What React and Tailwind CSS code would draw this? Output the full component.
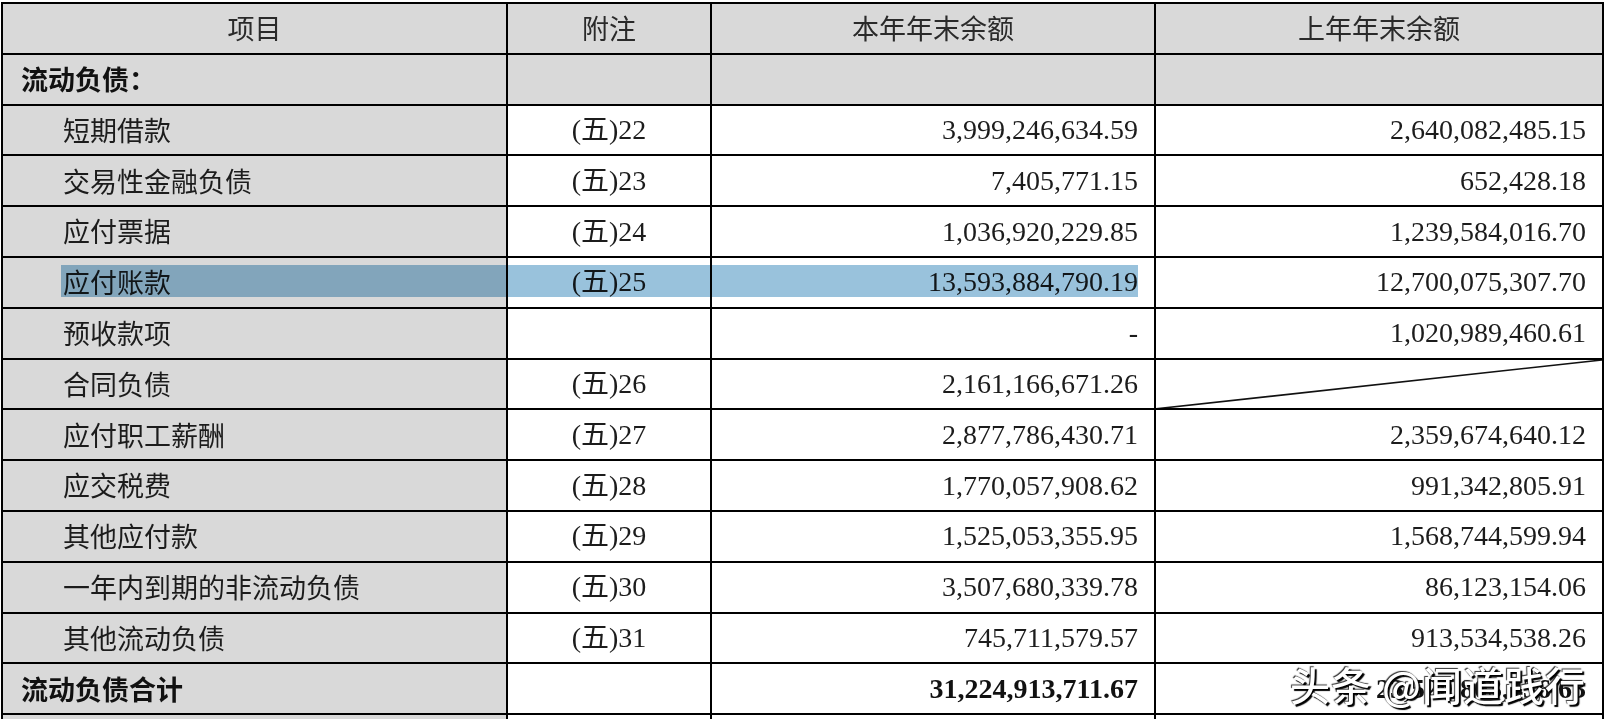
import React from 'react'

const rows = [
  { name: '短期借款', note: '(五)22', cur: '3,999,246,634.59', prev: '2,640,082,485.15' },
  { name: '交易性金融负债', note: '(五)23', cur: '7,405,771.15', prev: '652,428.18' },
  { name: '应付票据', note: '(五)24', cur: '1,036,920,229.85', prev: '1,239,584,016.70' },
  { name: '应付账款', note: '(五)25', cur: '13,593,884,790.19', prev: '12,700,075,307.70' },
  { name: '预收款项', note: '', cur: '-', prev: '1,020,989,460.61' },
  { name: '合同负债', note: '(五)26', cur: '2,161,166,671.26', prev: null },
  { name: '应付职工薪酬', note: '(五)27', cur: '2,877,786,430.71', prev: '2,359,674,640.12' },
  { name: '应交税费', note: '(五)28', cur: '1,770,057,908.62', prev: '991,342,805.91' },
  { name: '其他应付款', note: '(五)29', cur: '1,525,053,355.95', prev: '1,568,744,599.94' },
  { name: '一年内到期的非流动负债', note: '(五)30', cur: '3,507,680,339.78', prev: '86,123,154.06' },
  { name: '其他流动负债', note: '(五)31', cur: '745,711,579.57', prev: '913,534,538.26' },
]

const rowCls = "grid grid-cols-[505px_204px_444px_448px] h-[50.8px]"
const cell = "border-r-2 border-b-2 border-black flex items-center overflow-hidden"
const cjk = "font-['Noto_Sans_CJK_SC',sans-serif]"
const num = "font-['Liberation_Serif','Noto_Sans_CJK_SC',serif]"

function Row({ r }) {
  return (
    <div className={rowCls}>
      <div className={`${cell} bg-[#d9d9d9] pl-[60px] ${cjk} text-[27px] text-[#1c1c1c]`}>{r.name}</div>
      <div className={`${cell} bg-white justify-center ${num} text-[28px] text-[#1c1c1c]`}>{r.note}</div>
      <div className={`${cell} bg-white justify-end pr-[16px] ${num} text-[28px] text-[#1c1c1c]`}>{r.cur}</div>
      {r.prev === null ? (
        <div className={`${cell} bg-white relative`}>
          <svg className="absolute inset-0 w-full h-full" viewBox="0 0 100 100" preserveAspectRatio="none">
            <line x1="0" y1="100" x2="100" y2="0" stroke="#111" strokeWidth="1.6" vectorEffect="non-scaling-stroke" />
          </svg>
        </div>
      ) : (
        <div className={`${cell} bg-white justify-end pr-[16px] ${num} text-[28px] text-[#1c1c1c]`}>{r.prev}</div>
      )}
    </div>
  )
}

export default function App() {
  return (
    <div className="relative w-[1607px] h-[719px] overflow-hidden bg-white">
      <div className="ml-px mt-[2px] w-[1603px] border-l-2 border-t-2 border-black">
        <div className={rowCls}>
          <div className={`${cell} bg-[#d9d9d9] justify-center ${cjk} text-[27px] text-[#2a2a2a]`}>项目</div>
          <div className={`${cell} bg-[#d9d9d9] justify-center ${cjk} text-[27px] text-[#2a2a2a]`}>附注</div>
          <div className={`${cell} bg-[#d9d9d9] justify-center ${cjk} text-[27px] text-[#2a2a2a]`}>本年年末余额</div>
          <div className={`${cell} bg-[#d9d9d9] justify-center ${cjk} text-[27px] text-[#2a2a2a]`}>上年年末余额</div>
        </div>
        <div className={rowCls}>
          <div className={`${cell} bg-[#d9d9d9] pl-[18px] ${cjk} text-[27px] font-bold text-[#111]`}>流动负债：</div>
          <div className={`${cell} bg-[#d9d9d9]`}></div>
          <div className={`${cell} bg-[#d9d9d9]`}></div>
          <div className={`${cell} bg-[#d9d9d9]`}></div>
        </div>
        {rows.map((r) => (
          <Row key={r.name} r={r} />
        ))}
        <div className={rowCls}>
          <div className={`${cell} bg-[#d9d9d9] pl-[18px] ${cjk} text-[27px] font-bold text-[#111]`}>流动负债合计</div>
          <div className={`${cell} bg-white`}></div>
          <div className={`${cell} bg-white justify-end pr-[16px] ${num} text-[28px] font-bold text-[#111]`}>31,224,913,711.67</div>
          <div className={`${cell} bg-white justify-end pr-[16px] ${num} text-[28px] font-bold text-[#111]`}>23,520,803,436.63</div>
        </div>
        <div className={rowCls}>
          <div className={`${cell} bg-[#d9d9d9]`}></div>
          <div className={`${cell} bg-white`}></div>
          <div className={`${cell} bg-white`}></div>
          <div className={`${cell} bg-white`}></div>
        </div>
      </div>

      {/* text selection highlight */}
      <div className="absolute left-[61px] top-[265px] w-[1077px] h-[32px] bg-[#99c2dc] mix-blend-multiply pointer-events-none"></div>

      {/* watermark */}
      <div className={`absolute left-[1290px] top-[664px] ${cjk} text-[40px] font-medium leading-none tracking-[1px] text-white [text-shadow:2px_2px_1px_#000,-1px_-1px_1px_#333] whitespace-nowrap`}>
        头条 @闻道践行
      </div>
    </div>
  )
}
